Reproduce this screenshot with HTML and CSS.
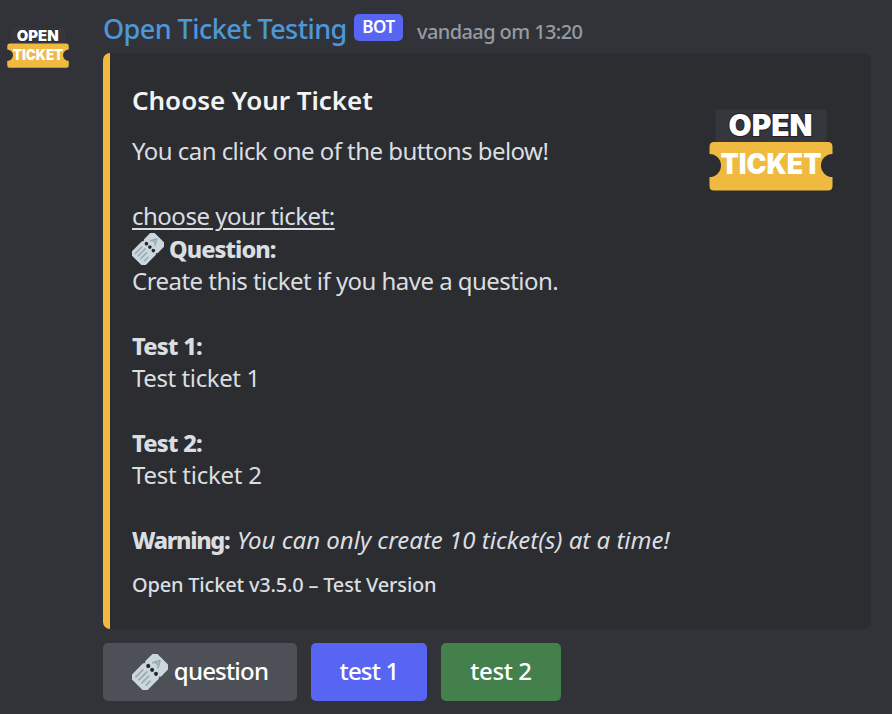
FILE: index.html
```
<!DOCTYPE html>
<html lang="nl">
<head>
<meta charset="utf-8">
<title>Open Ticket Testing</title>
<link rel="stylesheet" href="styles.css">
</head>
<body>
<svg class="defs" width="0" height="0" aria-hidden="true">
  <symbol id="logo" viewBox="0 0 124 82">
    <rect class="logo-back" x="6" y="0" width="112" height="36" rx="3"/>
    <path class="logo-ticket" d="M5 33H119Q123.500 33 123.500 38V45A11.500 11.500 0 0 0 123.500 68V77Q123.500 81.500 119 81.500H5Q.5 81.500 .5 77V68A11.500 11.500 0 0 0 .5 45V38Q.5 33 5 33Z"/>
    <text class="logo-open" x="61.500" y="27" textLength="84" lengthAdjust="spacingAndGlyphs">OPEN</text>
    <text class="logo-name" x="62" y="65" textLength="101" lengthAdjust="spacingAndGlyphs">TICKET</text>
  </symbol>
  <symbol id="ticket" viewBox="0 0 36 36">
    <g transform="rotate(-45 18 18)">
      <path fill="#ccd6dd" d="M3.500 7H18.500Q20.500 7 21 8.500Q21.500 7 23.500 7H32.500Q36 7 36 10.500V25.500Q36 29 32.500 29H23.500Q21.500 29 21 27.500Q20.500 29 18.500 29H3.500Q0 29 0 25.500V10.500Q0 7 3.500 7Z"/>
      <path class="ticket-lines" d="M4.500 11.500H14.500M4.500 15.700H16M4.500 20H14M6 24.500H11.500"/>
      <path class="ticket-letter" d="M26 13L33 17L26 21M28.700 15V19"/>
      <g class="ticket-holes"><circle cx="21" cy="12.500" r="2"/><circle cx="21" cy="18" r="2"/><circle cx="21" cy="23.500" r="2"/></g>
    </g>
  </symbol>
</svg>
<article class="message">
  <svg class="avatar"><use href="#logo"/></svg>
  <div class="content">
    <header class="heading">
      <span class="author">Open Ticket Testing</span>
      <span class="badge">BOT</span>
      <time class="time">vandaag om 13:20</time>
    </header>
    <section class="embed">
      <div class="embed-main">
        <h1 class="title">Choose Your Ticket</h1>
        <div class="description">
          <p class="l-click">You can click one of the buttons below!</p>
          <p class="gap l-choose"><u>choose your ticket:</u></p>
          <p class="with-icon"><svg class="emoji"><use href="#ticket"/></svg><b class="l-question">Question:</b></p>
          <p class="l-create">Create this ticket if you have a question.</p>
          <p class="gap"><b class="l-test">Test 1:</b></p>
          <p class="l-sub one">Test ticket 1</p>
          <p class="gap"><b class="l-test">Test 2:</b></p>
          <p class="l-sub">Test ticket 2</p>
          <p class="gap warning"><b class="l-warn">Warning:</b><i class="l-limit">You can only create 10 ticket(s) at a time!</i></p>
        </div>
        <footer class="footer">Open Ticket v3.5.0 – Test Version</footer>
      </div>
      <svg class="thumbnail"><use href="#logo"/></svg>
    </section>
    <div class="buttons">
      <button class="button grey"><svg class="emoji"><use href="#ticket"/></svg><span>question</span></button>
      <button class="button blue"><span>test 1</span></button>
      <button class="button green"><span>test 2</span></button>
    </div>
  </div>
</article>
</body>
</html>
```
FILE: styles.css
```
* { box-sizing: border-box; }
body { margin: 0; background: #323338; color: #dbdee1; font-family: "Noto Sans", sans-serif; font-size: 24px; overflow: hidden; }
p, h1 { margin: 0; }
.defs { position: absolute; }
.message { display: flex; width: 892px; height: 714px; padding-left: 7px; }
.avatar { flex: none; width: 62px; height: 41px; margin: 27px 34px 0 0; }
.content { width: 768px; }
.heading { display: flex; height: 53px; white-space: nowrap; }
.author { width: 251px; line-height: 36px; padding-top: 11px; font-size: 27px; font-weight: 500; color: #4e97d8; letter-spacing: -.55px; }
.badge { width: 49px; height: 27px; margin-top: 14px; border-radius: 5px; background: #5865f2; color: #fff; font-size: 17px; font-weight: 600; line-height: 25px; text-align: center; letter-spacing: -.4px; }
.time { margin-left: 14px; padding-top: 17px; line-height: 30px; font-size: 20px; font-weight: 500; color: #949ba4; letter-spacing: -.6px; }
.embed { display: flex; height: 576px; background: #2b2d31; border-left: 7px solid #f0b93f; border-radius: 7px; }
.embed-main { width: 577px; padding: 29px 0 0 22px; white-space: nowrap; }
.title { font-size: 26px; line-height: 36px; font-weight: 600; color: #f2f3f5; letter-spacing: -.03px; }
.description { margin-top: 17px; }
.description p { display: flex; align-items: center; height: 32.400px; line-height: 32.400px; }
.description p.gap { margin-top: 32.400px; }
u { text-decoration-thickness: 2px; text-underline-offset: 3px; }
b { font-weight: 800; font-size: 23.500px; }
.emoji { width: 32px; height: 32px; margin: 1px 6px 0 0; flex: none; }
.l-click { letter-spacing: -.55px; }
.l-choose { letter-spacing: -.5px; }
.l-create { letter-spacing: -.54px; }
.l-question { margin-left: -1px; letter-spacing: -.95px; padding-top: 2px; }
.l-test { letter-spacing: -.75px; padding-top: 1px; }
.l-sub { letter-spacing: -.25px; }
.l-sub.one { letter-spacing: -.4px; }
.l-warn { width: 105px; letter-spacing: -1.350px; }
.footer { margin-top: 14px; font-size: 20px; line-height: 30px; font-weight: 500; letter-spacing: -.2px; }
.thumbnail { flex: none; width: 124px; height: 82px; margin: 56px 0 0 22px; }
.buttons { display: flex; gap: 14px; margin-top: 14px; }
.button { display: flex; align-items: center; justify-content: center; height: 58px; padding: 0 0 3px; border: 0; border-radius: 5px; color: #fff; font: 500 24px "Noto Sans", sans-serif; white-space: nowrap; letter-spacing: -.8px; }
.button .emoji { width: 36px; height: 36px; margin: 2px 6px 0 0; }
.grey { width: 194px; background: #4e5058; }
.blue { width: 116px; background: #5865f2; }
.green { width: 120px; background: #43804b; letter-spacing: -.4px; }
.logo-back { fill: #36373d; stroke: #292b2f; stroke-width: .7; }
.logo-ticket { fill: #f0b93f; }
.logo-open, .logo-name { font-family: Inter, "Liberation Sans", sans-serif; font-weight: 900; fill: #fff; text-anchor: middle; }
.logo-open { font-size: 29.500px; paint-order: stroke; stroke: #202225; stroke-width: 2px; }
.logo-name { font-size: 28px; }
.ticket-lines { fill: none; stroke: #9aaab4; stroke-width: 1.700; stroke-linecap: round; }
.ticket-letter { fill: none; stroke: #9aaab4; stroke-width: 1.700; stroke-linejoin: round; }
.ticket-holes { fill: #25272b; }
```
